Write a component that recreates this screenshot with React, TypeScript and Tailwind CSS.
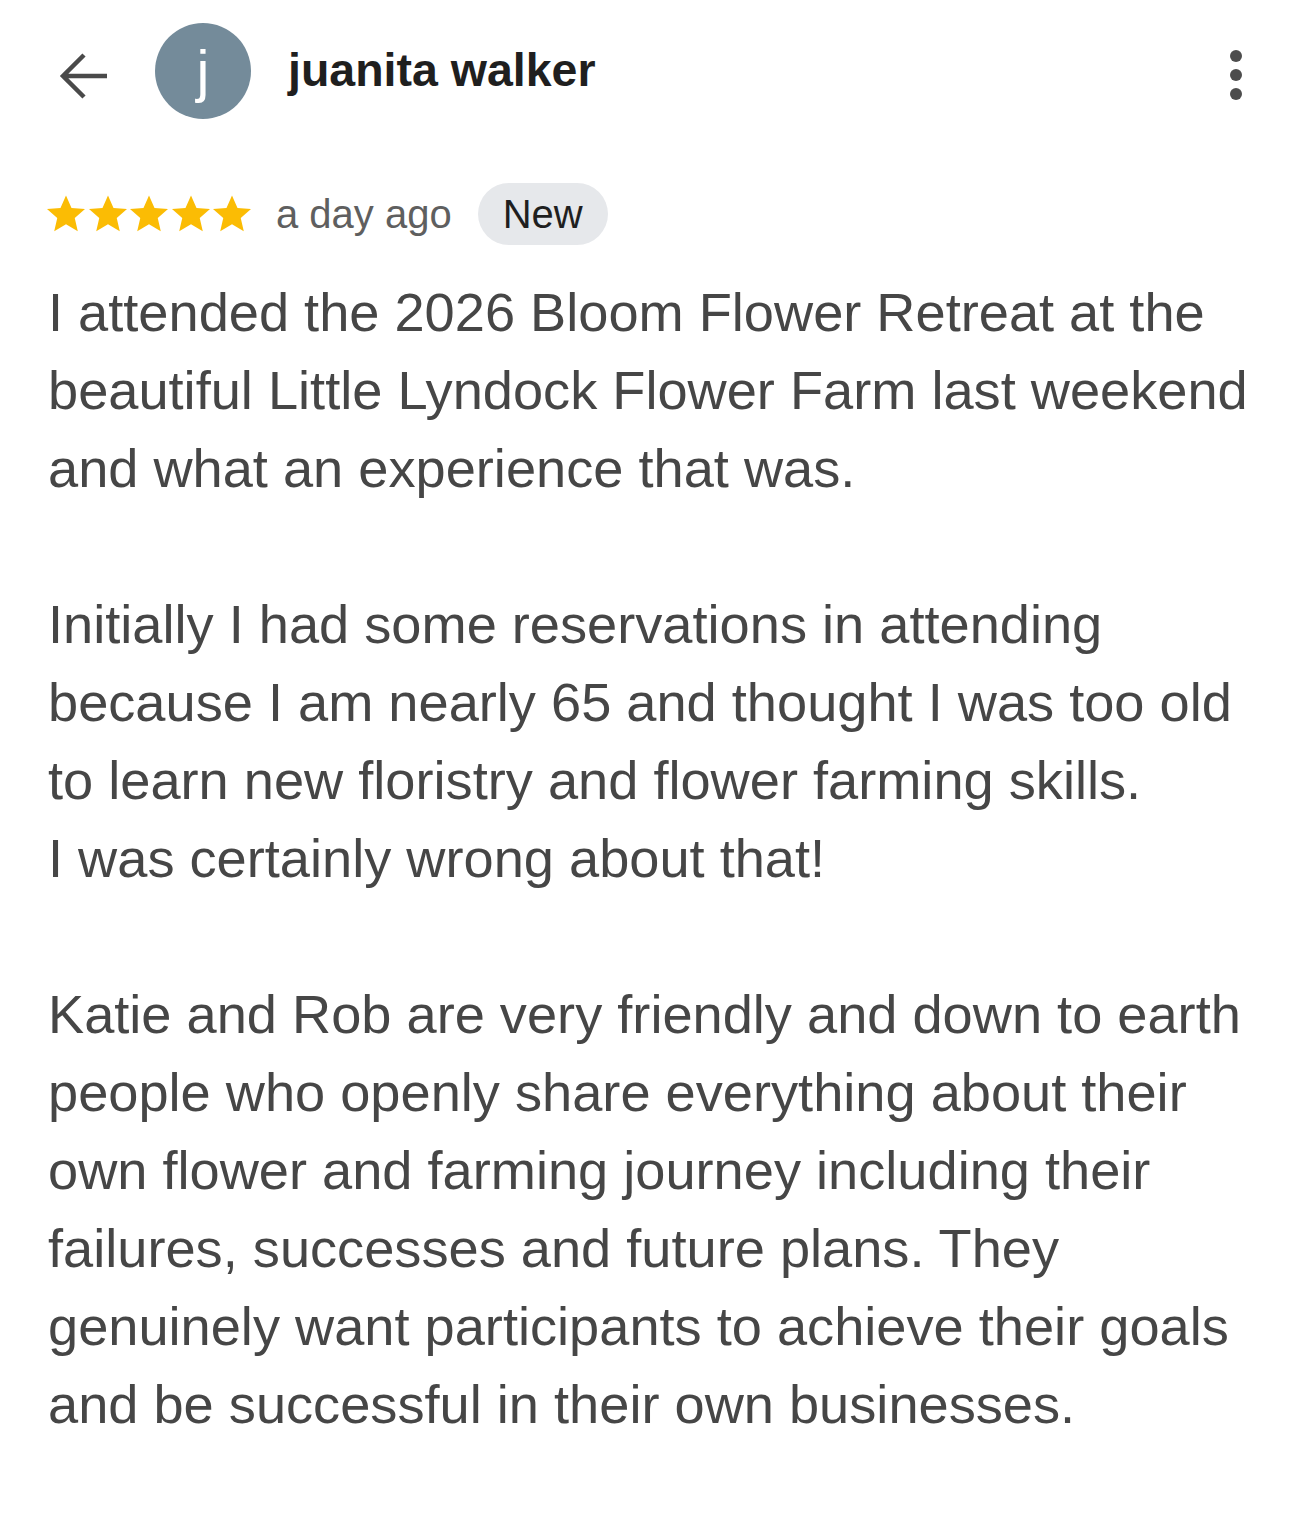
const paragraphs: string[][] = [
  [
    "I attended the 2026 Bloom Flower Retreat at the",
    "beautiful Little Lyndock Flower Farm last weekend",
    "and what an experience that was.",
  ],
  [
    "Initially I had some reservations in attending",
    "because I am nearly 65 and thought I was too old",
    "to learn new floristry and flower farming skills.",
    "I was certainly wrong about that!",
  ],
  [
    "Katie and Rob are very friendly and down to earth",
    "people who openly share everything about their",
    "own flower and farming journey including their",
    "failures, successes and future plans. They",
    "genuinely want participants to achieve their goals",
    "and be successful in their own businesses.",
  ],
];

function Star() {
  return (
    <svg width="38" height="38" viewBox="2 2 20 20">
      <path
        d="M12 2.2l2.9 6.6 7.1.6-5.4 4.7 1.6 7-6.2-3.7-6.2 3.7 1.6-7L2 9.4l7.1-.6z"
        fill="#fbbc04"
      />
    </svg>
  );
}

export default function App() {
  return (
    <div className="min-h-[1515px] w-[1289px] bg-white font-['Liberation_Sans',Arial,sans-serif]">
      {/* Header */}
      <div className="flex items-center pt-[23px] pl-[59px] pr-[47px]">
        <svg width="50" height="50" viewBox="0 0 50 50" className="mt-[10px]">
          <path
            d="M48 25H5M25 4L4 25l21 21"
            stroke="#4a4a4a"
            strokeWidth="4.5"
            fill="none"
          />
        </svg>
        <div className="ml-[46px] flex h-[96px] w-[96px] items-center justify-center rounded-full bg-[#748b9a]">
          <span className="text-[58px] leading-none font-light text-white">j</span>
        </div>
        <div className="ml-[37px] text-[46.5px] font-bold text-[#1f1f1f] leading-none -mt-[2px]">
          juanita walker
        </div>
        <div className="ml-auto flex flex-col gap-[7px] pt-[8px]">
          <span className="h-[12px] w-[12px] rounded-full bg-[#4d4d4d]" />
          <span className="h-[12px] w-[12px] rounded-full bg-[#4d4d4d]" />
          <span className="h-[12px] w-[12px] rounded-full bg-[#4d4d4d]" />
        </div>
      </div>

      {/* Rating row */}
      <div className="mt-[64px] flex items-center pl-[47px]">
        <div className="flex items-center gap-[3.5px]">
          <Star />
          <Star />
          <Star />
          <Star />
          <Star />
        </div>
        <span className="ml-[25px] text-[40px] text-[#5f5f5f] leading-none">a day ago</span>
        <span className="ml-[26px] flex h-[62px] items-center rounded-full bg-[#e6e8eb] px-[25px] text-[40px] text-[#1f1f1f] leading-none">
          New
        </span>
      </div>

      {/* Body */}
      <div className="mt-[28px] pl-[48px] text-[54.2px] leading-[78px] text-[#464646]">
        {paragraphs.map((lines, i) => (
          <div key={i} className={i > 0 ? "mt-[78px]" : ""}>
            {lines.map((line) => (
              <div key={line} className="whitespace-nowrap">
                {line}
              </div>
            ))}
          </div>
        ))}
      </div>
    </div>
  );
}
